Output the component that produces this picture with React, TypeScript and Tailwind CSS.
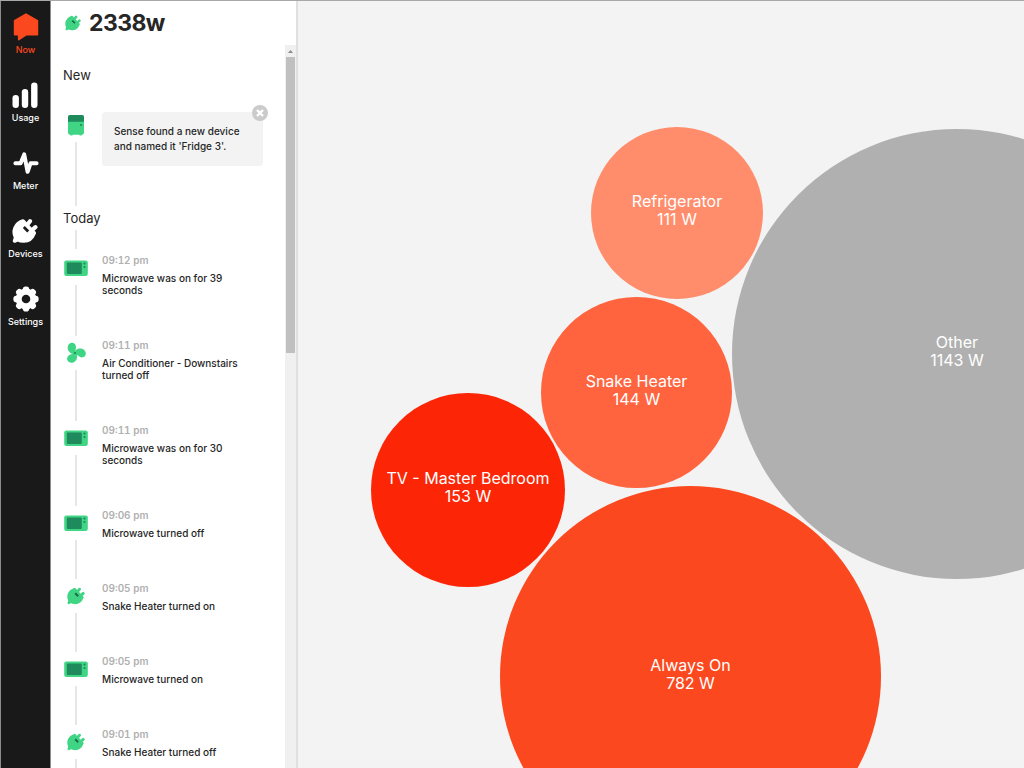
import React from "react";

type IconProps = { className?: string };

function PlugIcon({ className, slot }: IconProps & { slot: string }) {
  return (
    <svg viewBox="0 0 26 26" className={className} aria-hidden="true">
      <path
        d="M11 3 L22.2 15 C20.2 20 16.4 23 12 23 C9.8 23 7.4 22.6 5.6 21.6 L2.6 23 L3.6 19.4 C0.4 13.2 3 5.6 11 3 Z"
        fill="currentColor"
        stroke="currentColor"
        strokeWidth="3.6"
        strokeLinejoin="round"
      />
      <path
        d="M15 7 L18 3.2 M20.2 12 L23.4 9.2"
        stroke="currentColor"
        strokeWidth="4.2"
        strokeLinecap="round"
      />
      <path d="M11.8 9 L16.2 13.4" stroke={slot} strokeWidth="2.8" strokeLinecap="butt" />
    </svg>
  );
}

function HomeIcon() {
  return (
    <svg viewBox="0 0 26 28" className="h-7 w-[26px] shrink-0" aria-hidden="true">
      <path
        d="M13 1.2 L24.3 7.8 V21.6 H13.4 L5.8 26.6 V21.6 H1.7 V7.8 Z"
        fill="currentColor"
        stroke="currentColor"
        strokeWidth="1.8"
        strokeLinejoin="round"
      />
    </svg>
  );
}

function UsageIcon() {
  return (
    <svg viewBox="0 0 26 26" className="size-[26px]" fill="currentColor" aria-hidden="true">
      <rect x="0.5" y="13" width="6.4" height="13" rx="3.2" />
      <rect x="9.8" y="7" width="6.4" height="19" rx="3.2" />
      <rect x="19.1" y="0.5" width="6.4" height="25.5" rx="3.2" />
    </svg>
  );
}

function MeterIcon() {
  return (
    <svg viewBox="0 0 26 26" className="size-[26px]" fill="none" aria-hidden="true">
      <path
        d="M2.4 13.2 H7.6 L11.2 4.4 L14.6 21.8 L17.6 13.2 H23.6"
        stroke="currentColor"
        strokeWidth="4"
        strokeLinecap="round"
        strokeLinejoin="round"
      />
    </svg>
  );
}

function SettingsIcon() {
  return (
    <svg viewBox="0 0 26 26" className="size-[26px]" aria-hidden="true">
      <g fill="currentColor">
        <circle cx="13" cy="13" r="10.4" />
        {[0, 45, 90, 135].map((a) => (
          <rect key={a} x="9.8" y="0.4" width="6.4" height="25.2" rx="2.8" transform={`rotate(${a} 13 13)`} />
        ))}
      </g>
      <circle cx="13" cy="13" r="4.3" fill="#191919" />
    </svg>
  );
}

function FridgeIcon() {
  return (
    <svg viewBox="0 0 26 26" className="size-[26px]" aria-hidden="true">
      <path d="M6.5 21 h3 v2.6 h-2 z M16.5 21 h3 l-1 2.6 h-2 z" fill="#3fd584" />
      <rect x="5" y="3" width="16" height="19.8" rx="2.2" fill="#3fd584" />
      <path d="M5 9.8 V5.2 A2.2 2.2 0 0 1 7.2 3 H18.8 A2.2 2.2 0 0 1 21 5.2 V9.8 Z" fill="#1f8a5b" />
      <circle cx="18" cy="13" r="1.1" fill="#1f8a5b" />
    </svg>
  );
}

function MicrowaveIcon() {
  return (
    <svg viewBox="0 0 26 26" className="size-[26px]" aria-hidden="true">
      <rect x="1.2" y="5.4" width="23.6" height="15.6" rx="2.2" fill="#3fd584" />
      <rect x="3.8" y="7.6" width="15" height="11.4" rx="1" fill="#1f8a5b" />
      <circle cx="21.5" cy="8.6" r="1.1" fill="#1f8a5b" />
      <circle cx="21.5" cy="12" r="1.1" fill="#1f8a5b" />
    </svg>
  );
}

function FanIcon() {
  return (
    <svg viewBox="0 0 26 26" className="size-[26px]" aria-hidden="true">
      {[0, 120, 240].map((a) => (
        <path
          key={a}
          transform={`rotate(${a} 12 13)`}
          d="M11 14 C12 9 16 7.8 19 8.8 C22.6 10 23.8 13.6 22 16 C20 18.4 16.6 17.4 15 15.6 C14 14.5 13 14 11 14 Z"
          fill="#3fd584"
        />
      ))}
      <circle cx="12" cy="13" r="2.2" fill="#3fd584" />
      <circle cx="12" cy="13" r="1.1" fill="#1f8a5b" />
    </svg>
  );
}

const nav = [
  { label: "Now", icon: <HomeIcon />, active: true },
  { label: "Usage", icon: <UsageIcon /> },
  { label: "Meter", icon: <MeterIcon /> },
  { label: "Devices", icon: <PlugIcon className="size-[26px]" slot="#191919" /> },
  { label: "Settings", icon: <SettingsIcon /> },
];

const plug = <PlugIcon className="size-[18px] text-[#3fd584]" slot="#1f6b4b" />;

const events = [
  { time: "09:12 pm", text: "Microwave was on for 39 seconds", icon: <MicrowaveIcon /> },
  { time: "09:11 pm", text: "Air Conditioner - Downstairs turned off", icon: <FanIcon /> },
  { time: "09:11 pm", text: "Microwave was on for 30 seconds", icon: <MicrowaveIcon /> },
  { time: "09:06 pm", text: "Microwave turned off", icon: <MicrowaveIcon /> },
  { time: "09:05 pm", text: "Snake Heater turned on", icon: plug },
  { time: "09:05 pm", text: "Microwave turned on", icon: <MicrowaveIcon /> },
  { time: "09:01 pm", text: "Snake Heater turned off", icon: plug },
];

const bubbles = [
  { name: "Refrigerator", watts: 111, place: "left-[293px] top-[126px] size-[172px] bg-[#ff8d6c]" },
  { name: "Other", watts: 1143, place: "left-[434px] top-[128px] size-[450px] bg-[#b0b0b0]" },
  { name: "Snake Heater", watts: 144, place: "left-[243px] top-[296px] size-[191px] bg-[#ff643f]" },
  { name: "TV - Master Bedroom", watts: 153, place: "left-[73px] top-[392px] size-[194px] bg-[#fc2607]" },
  { name: "Always On", watts: 782, place: "left-[202px] top-[485px] size-[381px] bg-[#fc481e]" },
];

function Marker({ children }: { children: React.ReactNode }) {
  return (
    <div className="flex w-[26px] shrink-0 flex-col items-center">
      <div className="flex h-[34px] shrink-0 items-center justify-center">{children}</div>
      <div className="w-0.5 flex-1 bg-[#e6e6e6]" />
    </div>
  );
}

export default function App() {
  return (
    <div className="flex h-screen overflow-hidden border-t border-[#a8a8a8] bg-[#f3f3f3] font-['Inter','Liberation_Sans',sans-serif] text-[#262626]">
      <nav className="flex w-[51px] shrink-0 flex-col items-center gap-[26px] border-x border-[#8c8c8c] bg-[#191919] pt-[13px]">
        {nav.map((item) => (
          <a
            key={item.label}
            href="#"
            className={`flex flex-col items-center gap-1 ${item.active ? "text-[#fc481e]" : "text-white"}`}
          >
            <span className="flex h-[26px] items-center">{item.icon}</span>
            <span className="text-[9px] leading-3 font-medium">{item.label}</span>
          </a>
        ))}
      </nav>

      <aside className="flex w-[245px] shrink-0 flex-col bg-white">
        <header className="flex h-11 shrink-0 items-center gap-2 pl-3.5">
          <PlugIcon className="size-4 text-[#3fd584]" slot="#1f6b4b" />
          <h1 className="text-[23px] leading-7 font-bold tracking-tight">2338w</h1>
        </header>
        <div className="flex min-h-0 flex-1">
          <div className="min-w-0 flex-1 overflow-hidden pt-[18px] pl-3">
            <h2 className="text-[13px] leading-6">New</h2>
            <div className="mt-[21px] flex gap-[13px]">
              <Marker>
                <FridgeIcon />
              </Marker>
              <div className="flex-1 pt-1 pr-[22px] pb-10">
                <div className="relative rounded bg-[#f3f3f3] p-3 text-[10px] leading-[15px] font-medium">
                  Sense found a new device and named it 'Fridge 3'.
                  <button
                    type="button"
                    aria-label="Dismiss"
                    className="absolute -top-[7px] -right-[5px] flex size-4 items-center justify-center rounded-full bg-[#cbcbcb]"
                  >
                    <svg viewBox="0 0 8 8" className="size-2" aria-hidden="true">
                      <path d="M1 1 L7 7 M7 1 L1 7" stroke="#fff" strokeWidth="2.4" />
                    </svg>
                  </button>
                </div>
              </div>
            </div>
            <h2 className="text-[13px] leading-6">Today</h2>
            <div className="flex h-[21px] w-[26px] justify-center pb-0.5">
              <div className="w-0.5 bg-[#e6e6e6]" />
            </div>
            <ul>
              {events.map((event, i) => (
                <li key={i} className="flex gap-[13px]">
                  <Marker>{event.icon}</Marker>
                  <div className="flex-1 pr-9 pb-10">
                    <time className="block text-[10px] leading-[18px] font-semibold text-[#b0b0b0] tabular-nums">
                      {event.time}
                    </time>
                    <p className="pt-[3px] text-[10px] leading-3 font-medium">{event.text}</p>
                  </div>
                </li>
              ))}
            </ul>
          </div>
          <div className="flex w-[11px] shrink-0 flex-col items-center bg-[#f0f0f0]" aria-hidden="true">
            <svg viewBox="0 0 11 12" className="h-3 w-[11px] shrink-0">
              <path d="M3 8 L5.5 5 L8 8 Z" fill="#8a8a8a" />
            </svg>
            <div className="h-[41%] w-[9px] bg-[#c0c0c0]" />
          </div>
        </div>
      </aside>

      <main className="relative flex-1 overflow-hidden border-l-2 border-[#e0e0e0]">
        {bubbles.map((b) => (
          <div
            key={b.name}
            className={`absolute flex flex-col items-center justify-center rounded-full pb-1.5 text-center text-base leading-[18px] whitespace-nowrap text-white ${b.place}`}
          >
            <span>{b.name}</span>
            <span>{b.watts} W</span>
          </div>
        ))}
      </main>
    </div>
  );
}
